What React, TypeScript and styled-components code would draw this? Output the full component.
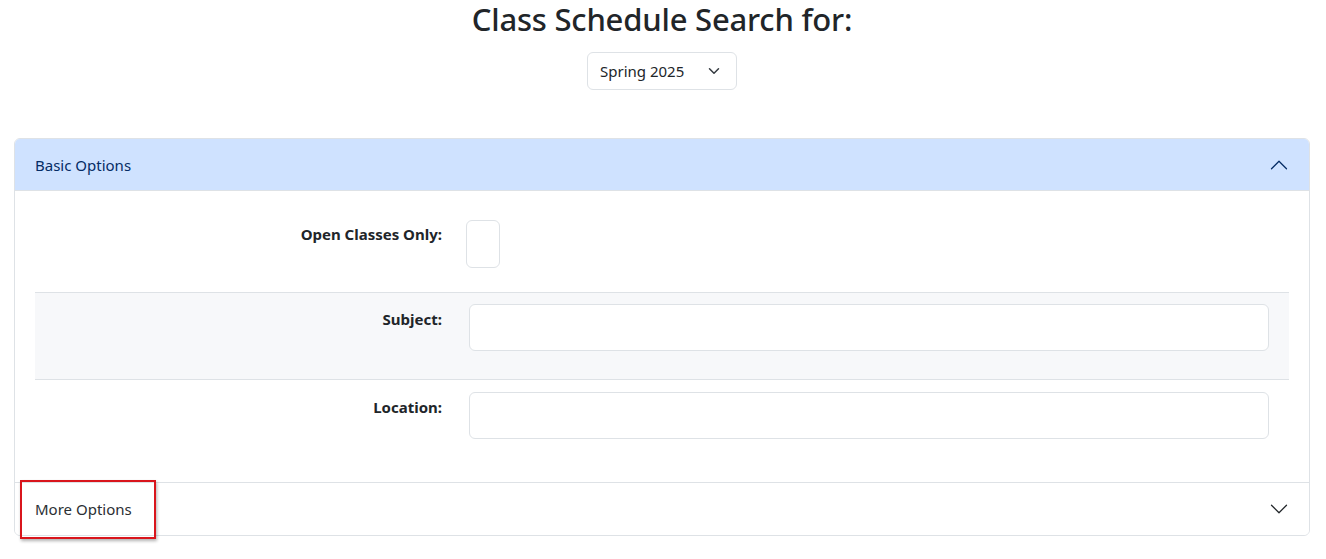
import React from "react";
import styled, { createGlobalStyle } from "styled-components";

const GlobalStyle = createGlobalStyle`
  body {
    margin: 0;
    background: #fff;
    color: #212529;
    font-family: "Noto Sans", "Open Sans", sans-serif;
    font-size: 15px;
    line-height: 1.5;
  }
`;

const Page = styled.div`
  min-height: 100vh;
  padding: 0 16px 0 14px;
  box-sizing: border-box;
`;

const Title = styled.h2`
  margin: 0;
  text-align: center;
  font-size: 31px;
  font-weight: 500;
  line-height: 38px;
  letter-spacing: -0.2px;
`;

const TermRow = styled.div`
  display: flex;
  justify-content: center;
  margin-top: 14px;
`;

const TermSelect = styled.button`
  display: flex;
  align-items: center;
  justify-content: space-between;
  width: 150px;
  height: 38px;
  padding: 0 16px 0 12px;
  border: 1px solid #dee2e6;
  border-radius: 6px;
  background: #fff;
  color: #212529;
  font: inherit;
  font-size: 15px;
`;

const Accordion = styled.div`
  margin-top: 48px;
  border: 1px solid #dee2e6;
  border-radius: 6px;
`;

const Item = styled.div`
  position: relative;
  & + & {
    border-top: 1px solid #dee2e6;
  }
`;

const Header = styled.button<{ $open?: boolean }>`
  display: flex;
  align-items: center;
  justify-content: space-between;
  width: 100%;
  height: 52px;
  padding: 0 20px;
  border: 0;
  border-radius: ${(p) => (p.$open ? "5px 5px 0 0" : "0 0 5px 5px")};
  background: ${(p) => (p.$open ? "#cfe2ff" : "#fff")};
  color: ${(p) => (p.$open ? "#052c65" : "#2b2f33")};
  box-shadow: ${(p) => (p.$open ? "inset 0 -1px 0 #dee2e6" : "none")};
  font: inherit;
  font-size: 15px;
  text-align: left;
`;

const Body = styled.div`
  padding: 16px 20px 15px;
`;

const FormRow = styled.div<{ $shaded?: boolean }>`
  display: grid;
  grid-template-columns: 418px 1fr;
  padding: ${(p) => (p.$shaded ? "11px 0 12px" : "12px 0")};
  background: ${(p) => (p.$shaded ? "#f7f8fa" : "transparent")};
  border-top: ${(p) => (p.$shaded ? "1px solid #dee2e6" : "0")};
  border-bottom: ${(p) => (p.$shaded ? "1px solid #dee2e6" : "0")};
`;

const Label = styled.label`
  padding: 3px 11px 0 0;
  text-align: right;
  font-weight: 700;
  font-size: 15px;
  line-height: 24px;
`;

const Field = styled.div`
  padding: 0 20px 0 16px;
`;

const TextInput = styled.div`
  height: 47px;
  margin-bottom: 16px;
  border: 1px solid #dee2e6;
  border-radius: 6px;
  background: #fff;
  box-sizing: border-box;
`;

const CheckBox = styled.div`
  width: 34px;
  height: 48px;
  margin: 1px 0 12px -3px;
  border: 1px solid #dee2e6;
  border-radius: 6px;
  background: #fff;
  box-sizing: border-box;
`;

const Callout = styled.div`
  position: absolute;
  left: 5px;
  top: -3px;
  width: 136px;
  height: 59px;
  border: 2px solid #d9151c;
  box-sizing: border-box;
  box-shadow: 1px 2px 3px rgba(0, 0, 0, 0.3);
  pointer-events: none;
`;

function Chevron({ up, color, size = 20, width = 1 }: { up?: boolean; color: string; size?: number; width?: number }) {
  return (
    <svg width={size} height={size} viewBox="0 0 16 16" fill="none" stroke={color} strokeWidth={width} strokeLinecap="round" strokeLinejoin="round">
      <path d={up ? "M2 11L8 5L14 11" : "M2 5L8 11L14 5"} />
    </svg>
  );
}

export default function App() {
  return (
    <Page>
      <GlobalStyle />
      <Title>Class Schedule Search for:</Title>
      <TermRow>
        <TermSelect>
          Spring 2025
          <Chevron color="#343a40" size={12} width={2} />
        </TermSelect>
      </TermRow>
      <Accordion>
        <Item>
          <Header $open>
            Basic Options
            <Chevron up color="#052c65" />
          </Header>
          <Body>
            <FormRow>
              <Label>Open Classes Only:</Label>
              <Field>
                <CheckBox />
              </Field>
            </FormRow>
            <FormRow $shaded>
              <Label>Subject:</Label>
              <Field>
                <TextInput />
              </Field>
            </FormRow>
            <FormRow>
              <Label>Location:</Label>
              <Field>
                <TextInput />
              </Field>
            </FormRow>
          </Body>
        </Item>
        <Item>
          <Header>
            More Options
            <Chevron color="#212529" />
          </Header>
          <Callout />
        </Item>
      </Accordion>
    </Page>
  );
}
